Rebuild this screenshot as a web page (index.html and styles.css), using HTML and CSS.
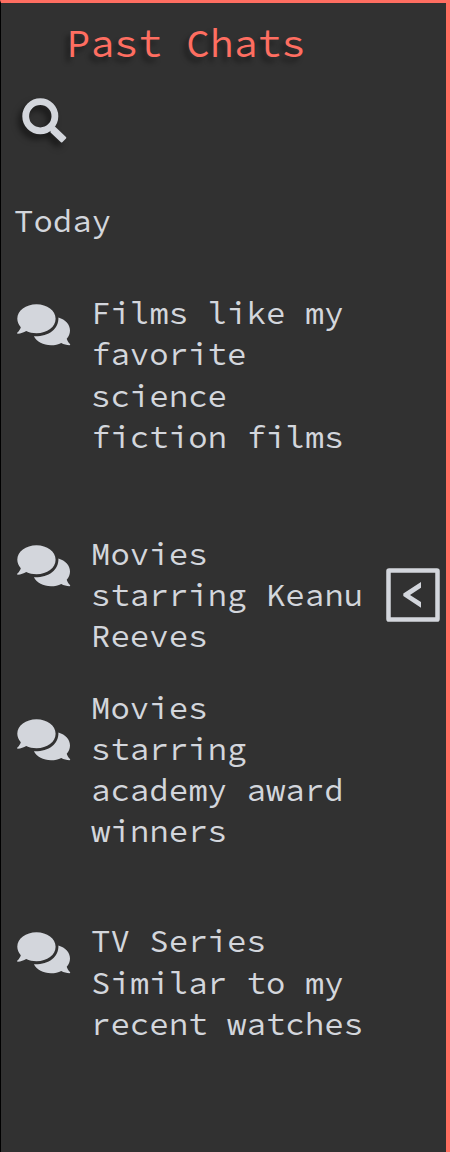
FILE: index.html
```html
<!DOCTYPE html>
<html lang="en">
<head>
<meta charset="utf-8">
<title>Past Chats</title>
<link rel="stylesheet" href="styles.css">
</head>
<body>
<svg class="sprite" aria-hidden="true">
  <symbol id="chat" viewBox="0 0 54 42">
    <path d="M19.5.3C30.2.3 38.6 6.7 38.6 14.800S30.200 29.300 19.500 29.300C15.700 29.300 12.200 28.500 9.200 27.100C6.700 28.700 4 29.600.6 29.700C.1 29.700 0 29 .4 28.600C1.900 27 3.300 25.100 3.800 23.200C1.700 20.800.3 18 .3 14.800C.3 6.700 8.800.3 19.500.3Z"/>
    <path d="M41.400 13.500C48.500 15.600 53 20.600 53 26.500C53 29.600 51.800 32.400 49.700 34.700C50.400 36.800 51.600 38.600 53 40C53.400 40.500 53.200 41.200 52.600 41.200C49.500 41.100 46.800 40.200 44.300 38.900C41.300 40.400 37.800 41.200 34 41.200C26.200 41.200 19.700 37.800 16.900 32.300C30.800 32.900 42 25.500 41.400 13.500Z"/>
  </symbol>
</svg>
<aside class="panel">
  <h1 class="title">Past Chats</h1>
  <svg class="search" viewBox="0 0 46 46"><circle cx="18.300" cy="18.200" r="14.600"/><path class="handle" d="M29.500 32.500L32.500 29.500L43.300 39.800L39.600 43.500L29.500 34Z"/></svg>
  <h2 class="group">Today</h2>
  <ul class="chats">
    <li class="chat chat-films"><svg class="icon"><use href="#chat"/></svg><p>Films like my<br>favorite<br>science<br>fiction films</p></li>
    <li class="chat chat-keanu"><svg class="icon"><use href="#chat"/></svg><p>Movies<br>starring Keanu<br>Reeves</p></li>
    <li class="chat chat-award"><svg class="icon"><use href="#chat"/></svg><p>Movies<br>starring<br>academy award<br>winners</p></li>
    <li class="chat chat-tv"><svg class="icon"><use href="#chat"/></svg><p>TV Series<br>Similar to my<br>recent watches</p></li>
  </ul>
  <button class="collapse" aria-label="Collapse"><svg viewBox="0 0 54 54"><rect x="2.500" y="2.500" width="49" height="49" rx=".6"/><path d="M35 14V19.800L24 27L35 34V39.800L17.300 28V25.600Z"/></svg></button>
</aside>
</body>
</html>
```
FILE: styles.css
```css
* { box-sizing: border-box; margin: 0; padding: 0; }
body {
  background: #313131;
  color: #d3d6dc;
  font-family: "Source Code Pro", "Noto Sans Mono CJK SC", "DejaVu Sans Mono", monospace;
}
.sprite { display: none; }
.panel {
  position: relative;
  height: 1152px;
  border-top: 3px solid #ff6e61;
  border-right: 4px solid #ff6e61;
  border-left: 1px solid #000;
  overflow: hidden;
}
.title {
  margin: 14px 0 0 65.5px;
  font-size: 39.8px;
  line-height: 52px;
  font-weight: 400;
  color: #ff6e61;
  white-space: nowrap;
  text-shadow: -4px 5px 5px rgba(0, 0, 0, .4);
}
.search {
  display: block;
  width: 46px;
  height: 46px;
  margin: 29px 0 0 21px;
  overflow: visible;
  fill: none;
  stroke: #d3d6dc;
  stroke-width: 6.800px;
  filter: drop-shadow(-4px 5px 3px rgba(0, 0, 0, .5));
}
.search .handle { fill: #d3d6dc; stroke-width: 2px; stroke-linejoin: round; }
.group {
  margin: 56px 0 0 13px;
  font-size: 32.400px;
  line-height: 41.2px;
  font-weight: 400;
}
.chats { list-style: none; margin-top: 51px; }
.chat {
  display: flex;
  gap: 20px;
  padding-left: 16px;
  font-size: 32.400px;
  line-height: 41.2px;
  white-space: nowrap;
}
.icon { width: 54px; height: 42px; margin-top: 11.5px; fill: #d3d6dc; flex: none; }
.chat-keanu { margin-top: 76px; }
.chat-award { margin-top: 30px; }
.chat-award .icon { margin-top: 32.5px; }
.chat-tv { margin-top: 69px; }
.collapse {
  position: absolute;
  top: 565px;
  right: 6px;
  width: 54px;
  height: 54px;
  border: 0;
  background: none;
}
.collapse svg { display: block; fill: #d3d6dc; }
.collapse rect { fill: none; stroke: #d3d6dc; stroke-width: 4.500px; }
```
